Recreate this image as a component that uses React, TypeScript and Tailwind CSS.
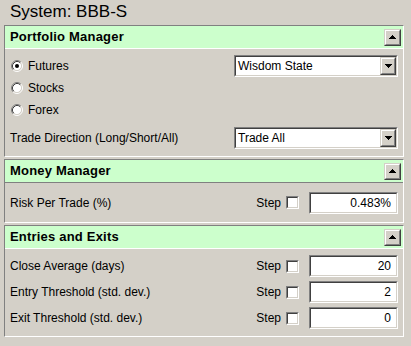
import React from 'react';

// Classic Win9x-style sunken / raised frames
const Sunken: React.FC<{ className?: string; children?: React.ReactNode }> = ({ className = '', children }) => (
  <div className={`border border-t-[#808080] border-l-[#808080] border-r-white border-b-white ${className}`}>
    <div className="h-full w-full border border-t-[#404040] border-l-[#404040] border-r-[#d4d0c8] border-b-[#d4d0c8] bg-white">
      {children}
    </div>
  </div>
);

const Raised: React.FC<{ className?: string; children?: React.ReactNode }> = ({ className = '', children }) => (
  <div className={`border border-t-[#d4d0c8] border-l-[#d4d0c8] border-r-[#404040] border-b-[#404040] ${className}`}>
    <div className="h-full w-full border border-t-white border-l-white border-r-[#808080] border-b-[#808080] bg-[#d4d0c8] flex items-center justify-center">
      {children}
    </div>
  </div>
);

const Arrow: React.FC<{ up?: boolean }> = ({ up }) => (
  <svg width="7" height="4" viewBox="0 0 7 4" shapeRendering="crispEdges" className={up ? '' : 'rotate-180'}>
    <rect x="3" y="0" width="1" height="1" fill="#000" />
    <rect x="2" y="1" width="3" height="1" fill="#000" />
    <rect x="1" y="2" width="5" height="1" fill="#000" />
    <rect x="0" y="3" width="7" height="1" fill="#000" />
  </svg>
);

const Radio: React.FC<{ checked?: boolean }> = ({ checked }) => (
  <svg width="12" height="12" viewBox="0 0 12 12" className="shrink-0">
    <circle cx="6" cy="6" r="4.5" fill="#fff" />
    <path d="M2.11 9.89 A5.5 5.5 0 0 1 9.89 2.11" stroke="#808080" fill="none" />
    <path d="M9.89 2.11 A5.5 5.5 0 0 1 2.11 9.89" stroke="#fff" fill="none" />
    <path d="M2.82 9.18 A4.5 4.5 0 0 1 9.18 2.82" stroke="#404040" fill="none" />
    <path d="M9.18 2.82 A4.5 4.5 0 0 1 2.82 9.18" stroke="#d4d0c8" fill="none" />
    {checked && <circle cx="6" cy="6" r="2" fill="#000" />}
  </svg>
);

const Select: React.FC<{ value: string }> = ({ value }) => (
  <Sunken className="w-[164px] h-[22px]">
    <div className="flex h-full items-center">
      <span className="flex-1 pl-[2px] text-[12px] leading-none">{value}</span>
      <Raised className="w-[16px] h-full">
        <Arrow />
      </Raised>
    </div>
  </Sunken>
);

const StepField: React.FC<{ value: string }> = ({ value }) => (
  <div className="flex items-center">
    <span className="text-[12px]">Step</span>
    <Sunken className="ml-[5px] w-[13px] h-[13px]" />
    <Sunken className="ml-[10px] w-[89px] h-[22px]">
      <div className="flex h-full items-center justify-end pr-[5px] text-[12px]">{value}</div>
    </Sunken>
  </div>
);

const Panel: React.FC<{ title: string; sep: string; children: React.ReactNode; className?: string }> = ({
  title,
  sep,
  children,
  className = '',
}) => (
  <div className={`ml-[4px] w-[400px] border border-t-[#808080] border-l-[#808080] border-r-white border-b-white ${className}`}>
    <div className="h-[22px] bg-[#ccffcc] flex items-center justify-between pl-[5px] pr-[2px]">
      <span className="text-[13px] font-bold tracking-[0.2px]">{title}</span>
      <Raised className="w-[17px] h-[17px]">
        <Arrow up />
      </Raised>
    </div>
    <div className={`h-px ${sep}`} />
    {children}
  </div>
);

export default function App() {
  return (
    <div className="min-h-screen w-full bg-[#d4d0c8] text-black font-['Liberation_Sans',Arial,sans-serif]">
      <div className="h-[25px] pt-[2px] pl-[10px] text-[17px] leading-[19px]">System: BBB-S</div>

      <Panel title="Portfolio Manager" sep="bg-white">
        <div className="pt-[6px] pb-[7px] px-[5px]">
          <div className="h-[22px] flex items-center justify-between">
            <label className="flex items-center gap-[5px] ml-[1px] text-[12px]">
              <Radio checked />
              Futures
            </label>
            <Select value="Wisdom State" />
          </div>
          <div className="h-[22px] flex items-center">
            <label className="flex items-center gap-[5px] ml-[1px] text-[12px]">
              <Radio />
              Stocks
            </label>
          </div>
          <div className="h-[22px] flex items-center">
            <label className="flex items-center gap-[5px] ml-[1px] text-[12px]">
              <Radio />
              Forex
            </label>
          </div>
          <div className="mt-[6px] h-[22px] flex items-center justify-between">
            <span className="text-[12px]">Trade Direction (Long/Short/All)</span>
            <Select value="Trade All" />
          </div>
        </div>
      </Panel>

      <Panel title="Money Manager" sep="bg-[#808080]" className="mt-[2px]">
        <div className="h-[39px] px-[5px] flex items-center justify-between">
          <span className="text-[12px]">Risk Per Trade (%)</span>
          <StepField value="0.483%" />
        </div>
      </Panel>

      <Panel title="Entries and Exits" sep="bg-white" className="mt-[2px]">
        <div className="pt-[6px] pb-[7px] px-[5px] flex flex-col gap-[4px]">
          {[
            ['Close Average (days)', '20'],
            ['Entry Threshold (std. dev.)', '2'],
            ['Exit Threshold (std. dev.)', '0'],
          ].map(([label, value]) => (
            <div key={label} className="h-[22px] flex items-center justify-between">
              <span className="text-[12px]">{label}</span>
              <StepField value={value} />
            </div>
          ))}
        </div>
      </Panel>
    </div>
  );
}
